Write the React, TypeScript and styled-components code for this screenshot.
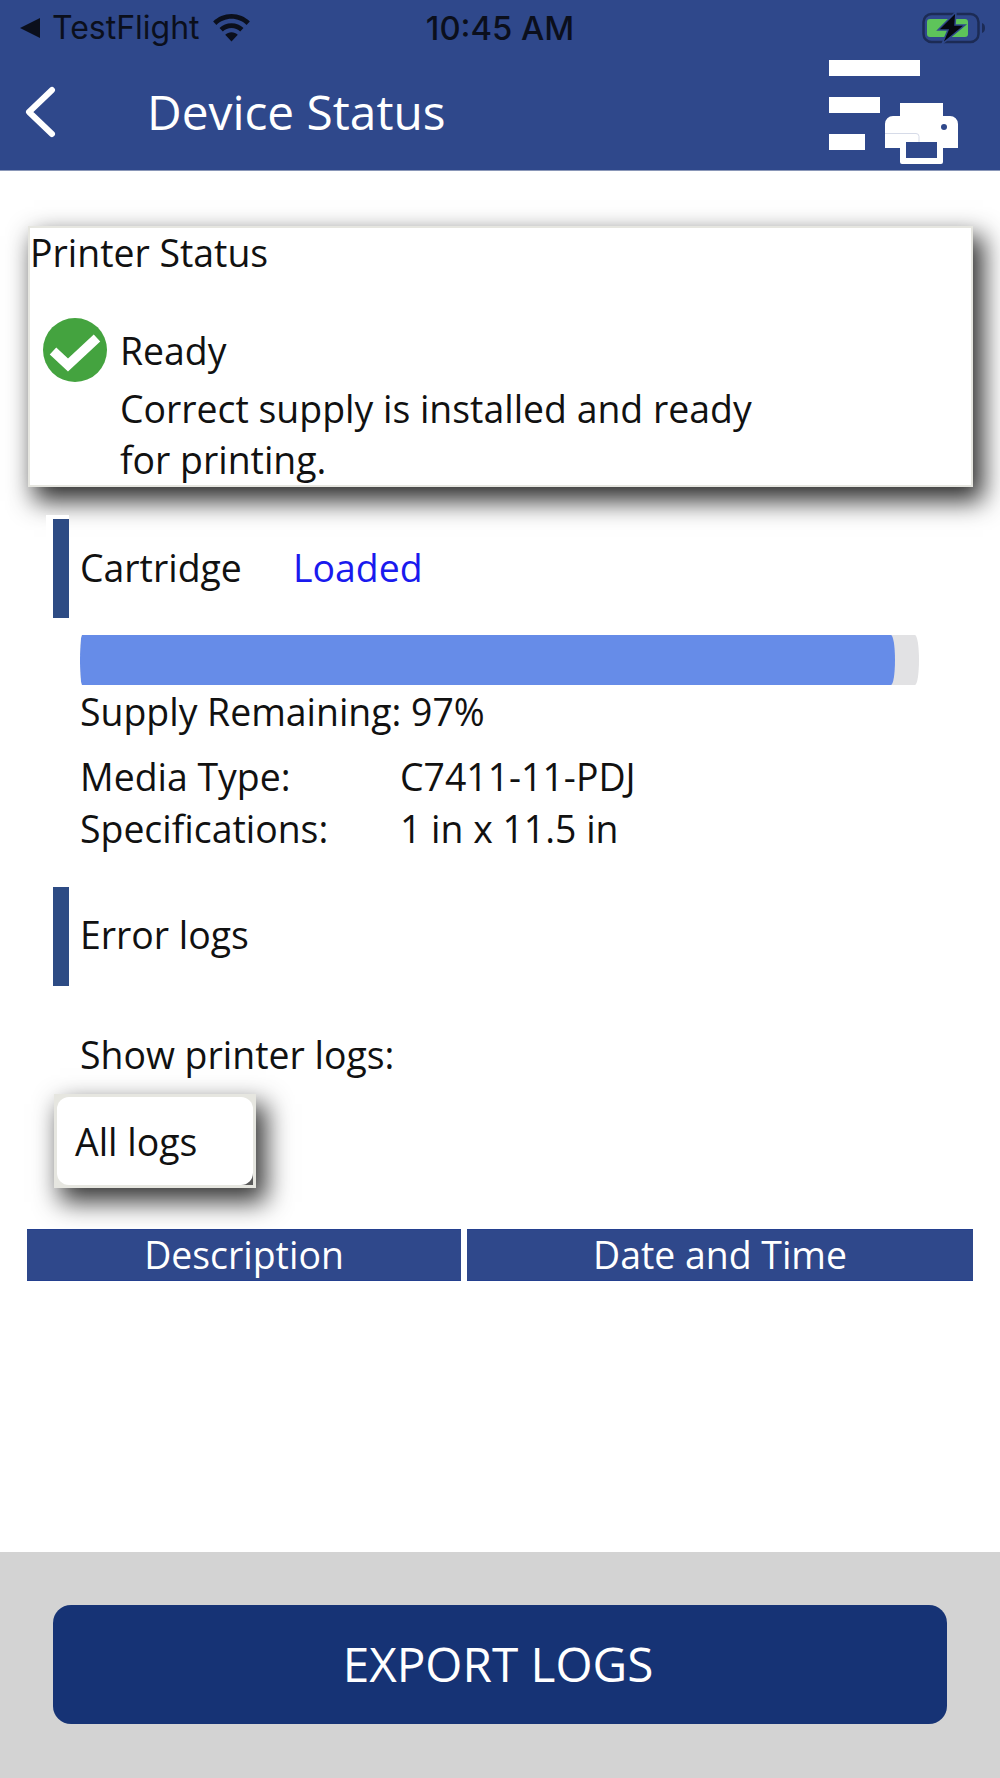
import React from "react";
import styled, { createGlobalStyle } from "styled-components";

const Global = createGlobalStyle`
  html, body { margin: 0; padding: 0; background: #fff; }
  * { box-sizing: border-box; }
`;

const Page = styled.div`
  width: 1000px;
  height: 1778px;
  display: flex;
  flex-direction: column;
  font-family: "Open Sans", "Noto Sans", sans-serif;
  font-size: 37.4px;
  line-height: 52px;
  color: #111;
  background: #fff;
  overflow: hidden;
`;

const Header = styled.header`
  height: 171px;
  flex: none;
  background: #2f488b;
  border-bottom: 1px solid #8a97b8;
  display: flex;
  flex-direction: column;
`;

const StatusBar = styled.div`
  height: 56px;
  padding: 0 14px 0 20px;
  display: grid;
  grid-template-columns: 1fr auto 1fr;
  align-items: center;
  font-family: Inter, Roboto, sans-serif;
  font-size: 32px;
  line-height: 40px;
  color: #0b0f1c;
`;

const StatusLeft = styled.div`
  display: flex;
  align-items: center;
`;

const BackCaret = styled.svg`
  margin-right: 12px;
`;

const WifiIcon = styled.svg`
  margin-left: 12px;
`;

const StatusRight = styled.div`
  display: flex;
  justify-content: flex-end;
`;

const Time = styled.span`
  font-weight: 500;
  font-size: 32.8px;
  margin-right: 6px;
`;

const NavBar = styled.div`
  flex: 1;
  display: flex;
  align-items: center;
  padding: 0 42px 2px 24px;
`;

const Title = styled.h1`
  margin: 0 0 0 91px;
  flex: 1;
  font-size: 47.8px;
  line-height: 64px;
  font-weight: 400;
  color: #fff;
`;

const Main = styled.main`
  flex: 1;
  display: flex;
  flex-direction: column;
  padding-top: 55px;
`;

const Card = styled.section`
  width: 945px;
  height: 261px;
  margin-left: 28px;
  background: #fff;
  border: 2px solid #e6e6e0;
  box-shadow: 8px 12px 24px 2px rgba(0, 0, 0, 0.82);
`;

const CardTitle = styled.div`
  height: 52px;
  line-height: 50px;
`;

const StatusRow = styled.div`
  margin-top: 38px;
  display: flex;
  align-items: flex-start;
`;

const StatusIcon = styled.div`
  width: 64px;
  height: 64px;
  margin: 0 13px;
  flex: none;
`;

const StatusText = styled.div`
  width: 660px;
  padding-top: 7px;
  line-height: 51px;
`;

const StatusHeadline = styled.div`
  height: 58px;
`;

const SectionHead = styled.div<{ $top: number; $lift: number }>`
  margin-top: ${(p) => p.$top}px;
  margin-left: 46px;
  height: 107px;
  padding-bottom: ${(p) => p.$lift}px;
  display: flex;
  align-items: center;
`;

const SectionMark = styled.div`
  align-self: flex-start;
  width: 23px;
  height: 107px;
  border: 4px solid #fff;
  border-left-width: 7px;
  border-right-width: 0;
  background: #2d4b84;
  margin-right: 11px;
  flex: none;
`;

const SectionLabel = styled.span`
  width: 213px;
`;

const Loaded = styled.span`
  color: #1a1aee;
`;

const Track = styled.div`
  margin: 13px 0 0 80px;
  width: 839px;
  height: 50px;
  background: #e2e2e4;
  border-radius: 2px 4px 4px 2px / 25px;
  overflow: hidden;
`;

const Fill = styled.div`
  height: 100%;
  background: #668ce8;
  border-radius: 2px 4px 4px 2px / 25px;
`;

const Details = styled.div`
  margin-left: 80px;
`;

const SupplyLine = styled.div`
  margin-top: 1px;
  height: 52px;
`;

const SpecList = styled.div`
  margin-top: 13px;
  display: grid;
  grid-template-columns: 320px auto;
  grid-auto-rows: 52px;
  justify-content: start;
  align-items: center;
`;

const ShowLogs = styled.div`
  margin: 39px 0 0 80px;
  height: 52px;
`;

const SelectFrame = styled.div`
  margin: 13px 0 0 54px;
  width: 202px;
  height: 94px;
  border: 3px solid #e6e6e0;
  background: linear-gradient(135deg, transparent calc(100% - 12px), #5a5a5a 0) padding-box, #e6e6e0;
  box-shadow: 8px 12px 24px 2px rgba(0, 0, 0, 0.78);
`;

const SelectBox = styled.div`
  height: 100%;
  background: #fff;
  border-radius: 12px;
  padding: 2px 0 0 18px;
  display: flex;
  align-items: center;
`;

const TableHead = styled.div`
  margin: 41px 0 0 27px;
  width: 946px;
  display: grid;
  grid-template-columns: 434px 506px;
  gap: 6px;
`;

const HeadCell = styled.div`
  height: 52px;
  line-height: 50px;
  text-align: center;
  background: #2f488b;
  color: #fff;
  border-top: 1px solid #24408f;
  border-bottom: 1px solid #24408f;
`;

const Footer = styled.footer`
  height: 226px;
  flex: none;
  background: #d3d3d3;
  padding: 53px 53px 54px;
`;

const ExportButton = styled.button`
  display: block;
  width: 100%;
  height: 119px;
  padding: 0 4px 2px 0;
  border: none;
  border-radius: 18px;
  background: #163375;
  color: #fff;
  font-family: "Open Sans", "Noto Sans", sans-serif;
  font-size: 47.7px;
  font-weight: 400;
`;

const Caret = () => (
  <BackCaret width="20" height="20" viewBox="0 0 20 20" aria-hidden="true">
    <path d="M20 0V20L0 10z" fill="#0b0f1c" />
  </BackCaret>
);

const Wifi = () => (
  <WifiIcon width="39" height="28" viewBox="0 0 40 29" aria-hidden="true">
    <path fill="#0b0f1c" d="M20 0C12.5 0 5.8 3 1 7.8l3.4 3.6C8.4 7.4 14 5 20 5s11.600 2.400 15.600 6.400L39 7.800C34.200 3 27.500 0 20 0z" />
    <path fill="#0b0f1c" d="M20 9.600c-4.800 0-9.200 1.900-12.400 5l3.400 3.600c2.300-2.200 5.500-3.600 9-3.600s6.700 1.400 9 3.600l3.400-3.600c-3.200-3.100-7.600-5-12.400-5z" />
    <path fill="#0b0f1c" d="M20 19c-2.500 0-4.800 1-6.500 2.600L20 28.500l6.500-6.900C24.800 20 22.500 19 20 19z" />
  </WifiIcon>
);

const Battery = () => (
  <svg width="64" height="32" viewBox="0 0 64 32" aria-hidden="true">
    <rect x="1.500" y="2" width="55" height="28" rx="8" fill="none" stroke="#1c2b55" strokeWidth="2.500" />
    <path d="M60 11c2 .6 3 2.500 3 5s-1 4.400-3 5z" fill="#1c2b55" />
    <rect x="5" y="7" width="41" height="18" rx="3" fill="#5ec45a" />
    <path d="M34 0 L16 18 H26 L20 32 L43 13 H33 Z" fill="#05070f" stroke="#2f488b" strokeWidth="1.500" />
  </svg>
);

const Back = () => (
  <svg width="32" height="52" viewBox="0 0 32 52" aria-hidden="true">
    <path d="M28 4 L5 26 L28 48" fill="none" stroke="#fff" strokeWidth="6" strokeLinecap="round" strokeLinejoin="round" />
  </svg>
);

const PrinterLogs = () => (
  <svg width="132" height="105" viewBox="0 0 132 105" aria-hidden="true">
    <path fill="#fff" d="M3 0h91v16H3zM3 37h51v16H3zM3 74h36v16H3z" />
    <path fill="#fff" d="M74 43h43v13h7a8 8 0 0 1 8 8v24h-15v14a2 2 0 0 1-2 2H76a2 2 0 0 1-2-2V88H59V64a8 8 0 0 1 8-8h7z" />
    <rect x="80" y="82" width="31" height="16" fill="#2f488b" />
    <circle cx="118" cy="67" r="3" fill="#2f488b" />
    <path d="M59 73.500h31a3 3 0 0 1 3 3V82" fill="none" stroke="#d6dbe8" strokeWidth="1" />
  </svg>
);

const CheckCircle = () => (
  <svg width="64" height="64" viewBox="0 0 64 64" aria-hidden="true">
    <circle cx="32" cy="32" r="32" fill="#44a33f" />
    <path d="M10 33 L25 47 L54 20" fill="none" stroke="#fff" strokeWidth="9.500" />
  </svg>
);

export default function App() {
  return (
    <Page>
      <Global />
      <Header>
        <StatusBar>
          <StatusLeft>
            <Caret />
            <span>TestFlight</span>
            <Wifi />
          </StatusLeft>
          <Time>10:45 AM</Time>
          <StatusRight>
            <Battery />
          </StatusRight>
        </StatusBar>
        <NavBar>
          <Back />
          <Title>Device Status</Title>
          <PrinterLogs />
        </NavBar>
      </Header>
      <Main>
        <Card>
          <CardTitle>Printer Status</CardTitle>
          <StatusRow>
            <StatusIcon>
              <CheckCircle />
            </StatusIcon>
            <StatusText>
              <StatusHeadline>Ready</StatusHeadline>
              Correct supply is installed and ready for printing.
            </StatusText>
          </StatusRow>
        </Card>
        <SectionHead $top={28} $lift={2}>
          <SectionMark />
          <SectionLabel>Cartridge</SectionLabel>
          <Loaded>Loaded</Loaded>
        </SectionHead>
        <Track>
          <Fill style={{ width: `${(815 / 839) * 100}%` }} />
        </Track>
        <Details>
          <SupplyLine>Supply Remaining: 97%</SupplyLine>
          <SpecList>
            <span>Media Type:</span>
            <span>C7411-11-PDJ</span>
            <span>Specifications:</span>
            <span>1 in x 11.5 in</span>
          </SpecList>
        </Details>
        <SectionHead $top={28} $lift={4}>
          <SectionMark />
          <SectionLabel>Error logs</SectionLabel>
        </SectionHead>
        <ShowLogs>Show printer logs:</ShowLogs>
        <SelectFrame>
          <SelectBox>All logs</SelectBox>
        </SelectFrame>
        <TableHead>
          <HeadCell>Description</HeadCell>
          <HeadCell>Date and Time</HeadCell>
        </TableHead>
      </Main>
      <Footer>
        <ExportButton>EXPORT LOGS</ExportButton>
      </Footer>
    </Page>
  );
}
